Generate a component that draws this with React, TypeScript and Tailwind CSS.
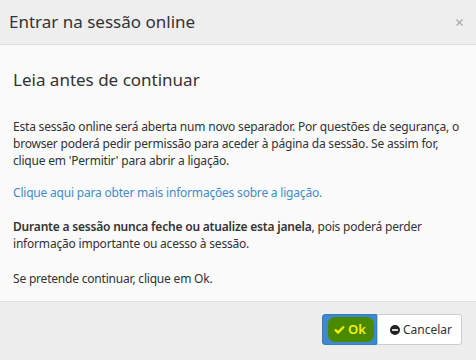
import { X } from "lucide-react";

export default function App() {
  return (
    <div className="w-[476px] h-[360px] flex flex-col bg-[#fafafa] text-[#333] font-['Noto_Sans',sans-serif] overflow-hidden">
      <div className="h-[45px] shrink-0 flex items-center justify-between pl-[9px] pr-[11px] bg-[#eeeeee] border-b border-[#dddddd]">
        <h2 className="text-[17px] leading-[24px] text-[#333]">Entrar na sessão online</h2>
        <X className="w-[11px] h-[11px] text-[#a8a8a8]" strokeWidth={2.5} />
      </div>

      <div className="flex-1 px-[13px] pt-[22px] text-[12px] leading-[17px] tracking-[-0.2px]">
        <h1 className="text-[17px] leading-[26px] mb-[25px] tracking-normal">Leia antes de continuar</h1>
        <p className="mb-[15px]">
          Esta sessão online será aberta num novo separador. Por questões de segurança, o browser poderá pedir
          permissão para aceder à página da sessão. Se assim for, clique em 'Permitir' para abrir a ligação.
        </p>
        <p className="mb-[17px]">
          <a href="#" className="text-[#428bca]">Clique aqui para obter mais informações sobre a ligação.</a>
        </p>
        <p className="mb-[18px]">
          <strong className="font-semibold">Durante a sessão nunca feche ou atualize esta janela</strong>, pois
          poderá perder informação importante ou acesso à sessão.
        </p>
        <p>Se pretende continuar, clique em Ok.</p>
      </div>

      <div className="h-[59px] shrink-0 flex items-start justify-end pt-[12px] pr-[14px] bg-[#ededed] border-t border-[#dddddd]">
        <button className="w-[55px] h-[31px] pl-[5px] pr-[2px] flex items-center bg-[#3f87cf] rounded-l-[3px] border border-[#357ebd]">
          <span className="flex items-center gap-[3px] bg-[#4a8a00] rounded-[7px] pl-[6px] pr-[8px] h-[25px] text-[13px] text-[#f2f200] font-semibold">
            <svg width="11" height="9" viewBox="0 0 11 9">
              <path d="M1 4.5 L4 7.5 L10 1.5" fill="none" stroke="#f2f200" strokeWidth="2.4" />
            </svg>
            Ok
          </span>
        </button>
        <button className="w-[85px] h-[31px] pl-[12px] flex items-center gap-[3px] bg-white border border-[#ccc] rounded-r-[3px] text-[12px] text-[#333]">
          <svg width="10" height="10" viewBox="0 0 12 12">
            <circle cx="6" cy="6" r="6" fill="#222" />
            <rect x="2.5" y="5" width="7" height="2" fill="#fff" />
          </svg>
          Cancelar
        </button>
      </div>
    </div>
  );
}
